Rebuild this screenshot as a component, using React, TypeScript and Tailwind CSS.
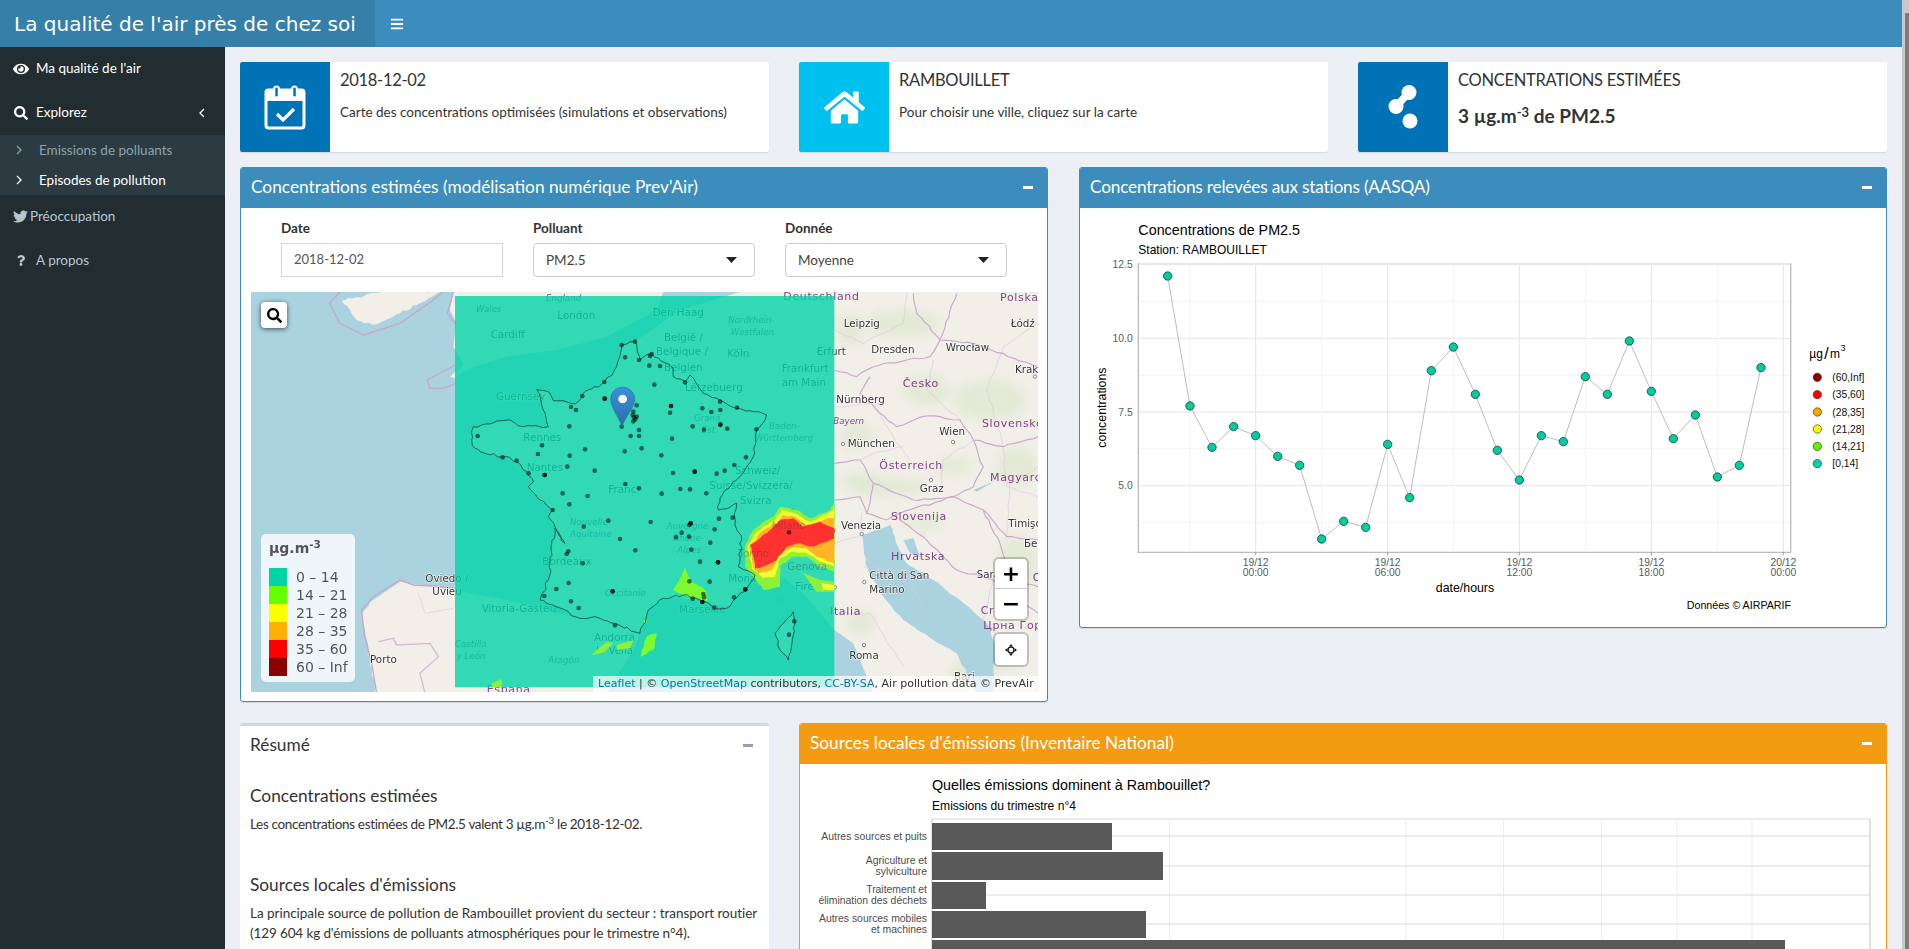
import React from "react";
import { FaEye, FaSearch, FaTwitter, FaQuestion, FaHome, FaBars } from "react-icons/fa";

const SANS = "'Liberation Sans', Arial, sans-serif";
const DJ = "'DejaVu Sans', sans-serif";

function jag(points: string, amp: number, step = 16, seed = 7) {
  let s = seed;
  const rnd = () => {
    s = (s * 16807) % 2147483647;
    return s / 2147483647 - 0.5;
  };
  const pts = points.trim().split(/\s+/).map((p) => p.split(",").map(Number));
  const out: string[] = [];
  for (let i = 0; i < pts.length - 1; i++) {
    const [x1, y1] = pts[i];
    const [x2, y2] = pts[i + 1];
    const len = Math.hypot(x2 - x1, y2 - y1);
    const n = Math.max(1, Math.round(len / step));
    for (let k = 0; k < n; k++) {
      const t = k / n;
      const j = k === 0 ? 0 : amp;
      out.push(`${(x1 + (x2 - x1) * t + rnd() * j).toFixed(1)},${(y1 + (y2 - y1) * t + rnd() * j).toFixed(1)}`);
    }
  }
  out.push(pts[pts.length - 1].join(","));
  return out.join(" ");
}

function Calendar() {
  return (
    <svg width="42" height="46" viewBox="0 0 42 46" fill="none">
      <rect x="2" y="6" width="38" height="38" rx="2.5" stroke="#fff" strokeWidth="3" fill="none" />
      <rect x="2" y="6" width="38" height="11" fill="#fff" />
      <rect x="9" y="1.5" width="7" height="13" rx="3.5" fill="#fff" />
      <rect x="27" y="1.5" width="7" height="13" rx="3.5" fill="#fff" />
      <rect x="11.3" y="3.5" width="2.5" height="9" rx="1.2" fill="#0073b7" />
      <rect x="29.3" y="3.5" width="2.5" height="9" rx="1.2" fill="#0073b7" />
      <path d="M13 30 L19 36 L30 25" stroke="#fff" strokeWidth="3.2" fill="none" />
    </svg>
  );
}

function Blobs() {
  return (
    <svg width="30" height="44" viewBox="0 0 30 44">
      <circle cx="21" cy="7.5" r="7.5" fill="#fff" />
      <circle cx="8" cy="21.5" r="7.5" fill="#fff" />
      <line x1="21" y1="7.5" x2="8" y2="21.5" stroke="#fff" strokeWidth="7.5" />
      <circle cx="22" cy="36" r="7.5" fill="#fff" />
    </svg>
  );
}

function Chevron({ dir, className = "" }: { dir: "left" | "right"; className?: string }) {
  return (
    <svg width="6" height="10" viewBox="0 0 6 10" className={className}>
      <polyline points={dir === "left" ? "5,1 1,5 5,9" : "1,1 5,5 1,9"} fill="none" stroke="currentColor" strokeWidth="1.3" />
    </svg>
  );
}

function Minus({ color = "bg-white" }: { color?: string }) {
  return <div className={`w-[10px] h-[3px] ${color}`} />;
}

function InfoBox({ color, icon, title, children }: { color: string; icon: React.ReactNode; title: string; children: React.ReactNode }) {
  return (
    <div className="h-[90px] bg-white rounded-[2px] flex shadow-[0_1px_1px_rgba(0,0,0,0.1)] overflow-hidden">
      <div className={`w-[90px] shrink-0 flex items-center justify-center ${color}`}>{icon}</div>
      <div className="pl-[10px] pt-[6px] text-[#333]">
        <div className="text-[16.5px] leading-[24px] tracking-[-0.3px]">{title}</div>
        {children}
      </div>
    </div>
  );
}

function Select({ value }: { value: string }) {
  return (
    <div className="h-[34px] border border-[#c9ccd3] rounded-[4px] bg-white flex items-center justify-between pl-[12px] pr-[17px] text-[13.5px] text-[#444]">
      <span>{value}</span>
      <svg width="11" height="6" viewBox="0 0 11 6"><polygon points="0,0 11,0 5.5,6" fill="#222" /></svg>
    </div>
  );
}

const dots2 = [[1145,195],[1185,185],[1155,232],[1093,306],[1027,348],[1094,356],[993,381],[1008,390],[988,439],[1145,440],[1172,468],[713,468],[906,496],[894,522],[989,527],[1035,508],[1154,514],[788,532],[830,542],[982,560],[866,580],[914,585],[1064,572],[1156,612],[968,640],[1043,648],[988,673],[938,690],[1105,722],[1031,740],[1140,777],[1186,811],[985,814],[980,822],[1028,850],[986,909],[949,927],[1118,934],[913,948],[993,964],[1016,984],[1125,1036],[1190,376],[1180,395],[1178,405],[1182,412],[1186,418],[1180,424],[1190,410],[1197,240],[1197,450],[1197,468],[1197,625]];
const dots3 = [[35,222],[30,228],[28,257],[60,258],[43,314],[135,307],[93,378],[90,398],[187,385],[214,396],[241,390],[240,365],[291,383],[158,439],[192,449],[241,434],[262,446],[349,448],[96,476],[5,505],[64,526],[318,532],[283,555],[254,572],[230,581],[164,575],[99,579],[121,627],[150,628],[199,640],[65,641],[237,716],[278,713],[32,726],[152,730],[148,735],[224,748],[125,758],[108,772],[147,770],[211,788],[154,809],[180,845],[234,847],[148,904],[209,905],[190,942],[192,952],[158,956],[187,966],[223,983],[282,952],[316,928],[447,757],[463,1024],[447,1064]];

const france = "1185,185 1145,195 1130,260 1095,305 1030,340 1005,372 940,362 925,335 890,328 910,390 925,440 850,440 810,420 750,432 700,440 695,480 705,505 735,520 790,530 830,545 860,575 880,605 865,620 900,660 940,690 925,710 945,740 975,790 945,745 925,900 900,960 950,980 1020,1015 1065,1010 1125,1030 1200,1060 1225,990 1270,955 1330,945 1380,960 1425,985 1460,985 1520,925 1545,885 1495,860 1505,780 1485,735 1490,670 1435,690 1440,655 1500,590 1540,530 1550,450 1580,405 1540,395 1490,385 1440,360 1390,340 1350,285 1335,305 1300,290 1300,265 1235,220 1200,240 1185,185";
const franceJag = jag(france, 9, 13);
const corsicaJag = jag("1660,995 1665,1030 1645,1140 1620,1110 1605,1060 1630,1030 1660,995", 7, 12, 31);

type L = [string, number, number];
const cities: L[] = [["London",952,116],["Cardiff",752,174],["Rennes",850,482],["Nantes",860,572],["Bordeaux",907,856],["Vitoria-Gasteiz",725,995],["Oviedo /",556,905],["Uviéu",577,946],["Porto",390,1150],["Andorra",1062,1082],["la Vella",1068,1122],
["Den Haag",1238,108],["Köln",1462,232],["Frankfurt",1625,276],["am Main",1625,318],["Erfurt",1730,226],["Leipzig",1811,140],["Dresden",1894,220],["Wrocław",2117,212],["Łódź",2312,142],["Krak",2325,278],["Nürnberg",1789,368],["München",1823,502],["Wien",2098,465],["Graz",2039,636],["Venezia",1803,748],["Timişo",2305,742],["Бео",2352,802],["Monaco",1465,906],["Firenze",1666,931],["Marseille",1318,1000],["Città di San",1888,896],["Marino",1888,938],["Sara",2210,894],["Roma",1828,1136],["Bari",2142,1200],["Schweiz/",1485,582],["Suisse/Svizzera/",1408,628],["Svizra",1500,672],["België /",1272,182],["Belgique /",1248,226],["Belgien",1272,272],["Lëtzebuerg",1335,334],["Guernsey",768,360],["Franc",1105,640]];
const countries: L[] = [["Deutschland",1630,60],["Polska",2280,62],["Česko",1988,322],["Slovensko",2226,440],["Österreich",1918,566],["Magyaro",2250,604],["Slovenija",1953,720],["Hrvatska",1953,840],["Italia",1770,1004],["Crna",2222,1002],["Црна Гор",2230,1048],["España",740,1238],["C",2378,902]];
const regions: L[] = [["Wales",708,96],["England",918,64],["Nouvelle-",990,736],["Aquitaine",990,772],["Occitanie",1095,948],["Castilla",645,1100],["y León",650,1136],["Aragón",925,1148],["Nordrhein-",1465,130],["Westfalen",1472,166],["Grand",1362,424],["Est",1385,460],["Baden-",1587,448],["Württemberg",1545,484],["Bayern",1780,432],["Auvergne-",1280,746],["Rhône-",1300,782],["Alpes",1312,818]];

const borders = [
  "1783,270 1850,290 1900,260 2000,240 2070,230 2100,180 2030,100 2020,40",
  "1890,290 1860,340 1920,400 1970,440 2045,410 2100,410 2160,420 2200,480 2290,500 2394,470",
  "1783,550 1860,540 1900,610 2020,660 2140,650 2200,620 2230,560 2200,480",
  "1900,610 1880,700 1940,720 1980,700 2140,650 2230,690 2300,770 2394,780",
  "1980,720 2050,770 2150,870 2260,900 2394,1000",
  "2230,690 2280,790 2310,900 2394,920",
  "2150,40 2100,180 2200,190 2394,260",
  "1783,660 1860,650 1880,700",
];
const minor = [
  "1783,150 1870,190 1990,130 2000,40", "1783,380 1900,370 1960,470 2010,540", "2080,240 2060,330 2160,420", "2290,500 2300,620 2394,650",
  "1990,500 1900,520 1860,540", "2100,640 2110,540 2200,480", "1783,790 1860,770 1865,700", "1870,860 1990,870 2060,1000", "1800,1000 1890,1000 1990,1160", "2394,130 2290,200 2240,330 2290,500",
  "2394,560 2310,610 2300,770", "2260,900 2230,1020 2300,1100",
];
const forests = [[1990,130,110,40],[2060,330,70,45],[1850,470,50,40],[1950,620,120,28],[2250,360,110,60],[2330,560,60,60],[2330,850,60,80],[1830,150,40,50],[2200,1180,70,40],[1860,1030,40,40],[1860,600,60,25],[2140,560,60,25],[2050,730,60,20],[2290,1120,60,50]];

function FranceMap() {
  return (
    <div className="relative w-[787px] h-[400px] overflow-hidden [font-family:'DejaVu_Sans',sans-serif]">
      <svg width="787" height="400" viewBox="0 0 787 400" className="block">
        <defs>
          <filter id="soft" x="-30%" y="-30%" width="160%" height="160%"><feGaussianBlur stdDeviation="16" /></filter>
          <linearGradient id="pin" x1="0" y1="0" x2="0" y2="1">
            <stop offset="0" stopColor="#3d8fd6" />
            <stop offset="1" stopColor="#2a6db3" />
          </linearGradient>
        </defs>
        <rect width="787" height="400" fill="#f2efe9" />
        <g transform="translate(-11,-12) scale(0.33333)">
          <g filter="url(#soft)">
            {forests.map(([x, y, a, b], i) => <ellipse key={i} cx={x} cy={y} rx={a} ry={b} fill="#d9e6c8" opacity="0.6" />)}
          </g>
          {/* Atlantic */}
          <polygon fill="#aad3df" points={`33,36 1500,36 1320,90 1185,185 ${france.split(" ").slice(1, 33).join(" ")} 800,960 640,930 480,905 400,960 ${jag("400,960 365,1000 385,1100 405,1240", 6, 14, 11)} 33,1240`} />
          {/* Med */}
          <polygon fill="#aad3df" points="1225,990 1200,1060 1180,1110 1100,1240 1900,1240 1840,1090 1783,1050 1700,950 1630,890 1545,885 1520,925 1460,985 1380,960 1270,955" />
          {/* Adriatic */}
          <polygon fill="#aad3df" points={jag("1865,765 1950,735 1975,800 2000,850 2080,900 2160,960 2240,1030 2265,1090 2260,1240 2210,1240 2150,1120 2080,1080 1990,1020 1930,950 1880,860 1865,765", 5, 14, 17)} />
          <polygon fill="#aad3df" points="1990,780 2020,775 2040,830 2010,820" />
          {/* UK and islands */}
          <polygon fill="#f2efe9" points="645,290 700,260 800,230 950,210 1100,170 1250,90 1270,36 640,36 630,90 650,130 640,200 670,250" />
          <polygon fill="#f2efe9" points={jag("305,62 350,52 420,36 600,36 530,75 480,100 400,135 350,120 330,90 305,62", 7, 12, 23)} />
          <polyline fill="none" stroke="#c8a6cc" strokeWidth="4" points="300,36 268,70 300,130 370,165 480,130 580,60 610,36" />
          <polyline fill="none" stroke="#c8a6cc" strokeWidth="4" points="640,36 622,100 645,130" />
          <polyline fill="none" stroke="#c8a6cc" strokeWidth="4" points="645,255 590,285 562,300 570,325 610,325 645,312" />
          <polygon fill="#f2efe9" points="630,290 645,275 645,295" />
          {/* Corsica */}
          <polygon fill="#f2efe9" points="1660,995 1665,1030 1645,1140 1620,1110 1605,1060 1630,1030" />
          {/* Spain boundaries */}
          <polyline fill="none" stroke="#c8a6cc" strokeWidth="4" points="640,922 520,915 480,900 400,950 365,990 372,1060 395,1150 410,1240" />
          <polyline fill="none" stroke="#d8b8d8" strokeWidth="4" points="415,1085 460,1075 470,1095 570,1090 595,1130 540,1180 555,1240" />
          <polyline fill="none" stroke="#e0c8d8" strokeWidth="2" points="535,940 555,1000 640,985" />
          {minor.map((b, i) => <polyline key={i} fill="none" stroke="#dcc8dc" strokeWidth="2" points={jag(b, 6, 18, 40 + i)} />)}
          {borders.map((b, i) => <polyline key={i} fill="none" stroke="#c9a8cb" strokeWidth="3.4" points={jag(b, 6, 18, 60 + i)} />)}
          <polygon fill="#a6d0e0" points="2200,630 2260,605 2210,635" />
          {/* labels */}
          {cities.map(([t, x, y], i) => <text key={i} x={x} y={y} fontFamily={DJ} fontSize="31" fill="#333" stroke="#fff" strokeWidth="3" paintOrder="stroke">{t}</text>)}
          {countries.map(([t, x, y], i) => <text key={i} x={x} y={y} fontFamily={DJ} fontSize="33" letterSpacing="2" fill="#85418a">{t}</text>)}
          {regions.map(([t, x, y], i) => <text key={i} x={x} y={y} fontFamily={DJ} fontSize="26" fontStyle="italic" fill="#7a4a88">{t}</text>)}
          {[[2139,486],[1809,492],[1873,906],[1872,1095],[2385,290],[1865,762],[2073,600],[1785,922],[1623,960]].map(([x, y], i) => <circle key={i} cx={x} cy={y} r="5" fill="#fff" stroke="#555" strokeWidth="2" />)}
          {/* pollution overlay */}
          <rect x="645" y="48" width="1138" height="1174" fill="#00d4a8" opacity="0.8" />
          <g transform="translate(1200,0)">
            <polygon fill="#8df03a" points={jag("315,800 340,750 400,710 420,680 470,690 510,715 570,690 583,665 583,875 540,860 500,830 460,830 420,860 420,920 370,930 340,890 315,860 315,800", 5, 12, 3)} />
            <polygon fill="#f3fb33" points={jag("322,800 350,755 405,720 425,690 465,700 510,725 565,700 583,685 583,860 540,845 500,820 460,815 420,835 405,890 370,895 335,865 322,800", 5, 12, 5)} />
            <polygon fill="#ffb326" points={jag("328,798 370,750 410,730 430,705 465,710 500,735 560,715 583,715 583,850 530,830 500,805 460,800 420,820 395,870 355,880 340,860 328,798", 5, 12, 9)} />
            <polygon fill="#ff3232" points={jag("330,795 390,750 420,720 460,715 490,740 540,725 583,745 583,775 520,800 480,790 440,800 410,840 370,860 345,865 340,830 330,795", 4, 12, 13)} />
            <polygon fill="#7dfb2c" points={jag("135,860 150,900 195,930 205,965 130,945 100,930 125,890 135,860", 4, 10, 19)} />
            <polygon fill="#7dfb2c" points={jag("0,1130 20,1070 50,1060 40,1110 0,1130", 4, 10, 21)} />
            <polygon fill="#8df03a" points="490,880 540,900 583,905 583,935 530,935" />
            <polygon fill="#f3fb33" points="545,910 583,915 583,930 550,930" />
            <polygon fill="#8df03a" points="-147,1125 -100,1085 -80,1090 -110,1120" />
            <polygon fill="#8df03a" points="-70,1095 -20,1080 -30,1105 -70,1110" />
            <polygon fill="#8df03a" points="-445,1210 -415,1197 -415,1222 -445,1222" />
            <polygon fill="#8df03a" points="12,1022 20,1020 20,1028 12,1028" />
            {([["Milano",395,746],["Torino",295,830],["Genova",442,871]] as [string, number, number][]).map(([t, x, y]) => <text key={t} x={x} y={y} fontFamily={DJ} fontSize="31" fill="#333" opacity="0.35">{t}</text>)}
          </g>
          {/* France outline */}
          <polyline fill="none" stroke="#0b3a33" strokeWidth="2.2" points={franceJag} />
          <polyline fill="none" stroke="#0b3a33" strokeWidth="2.2" points={corsicaJag} />
          {dots2.map(([x, y], i) => <circle key={i} cx={x} cy={y} r="7" fill="#000" opacity="0.55" />)}
          {dots3.map(([x, y], i) => <circle key={i} cx={x + 1200} cy={y} r="7" fill="#000" opacity="0.55" />)}
          {[[1094,356],[914,585],[1118,934],[1293,378],[1441,434],[1364,575],[1352,730],[1434,847],[1387,966],[1516,928]].map(([x, y], i) => <circle key={i} cx={x} cy={y} r="7" fill="#000" opacity="0.7" />)}
          <path d="M1148 322 C1125 322 1112 340 1112 358 C1112 380 1135 410 1146 438 C1157 410 1184 380 1184 358 C1184 340 1170 322 1148 322Z" fill="url(#pin)" stroke="#2e6c97" strokeWidth="2" />
          <circle cx="1148" cy="357" r="13" fill="#fff" />
        </g>
      </svg>

      <button className="absolute left-[10px] top-[10px] w-[26px] h-[26px] bg-white rounded-[4px] shadow-[0_1px_5px_rgba(0,0,0,0.65)] flex items-center justify-center text-black text-[15px]">
        <FaSearch />
      </button>

      <div className="absolute left-[10px] top-[242px] w-[94px] h-[148px] bg-white/80 rounded-[5px] pl-[8px] pt-[5px] text-[#555] text-[14px] leading-[18px]">
        <div className="font-bold h-[29px]">µg.m<sup className="text-[10.5px]">-3</sup></div>
        {[["#00d4a6","0 – 14"],["#66ff00","14 – 21"],["#ffff00","21 – 28"],["#ffb000","28 – 35"],["#ff0000","35 – 60"],["#8b0000","60 – Inf"]].map(([c, t]) => (
          <div key={t} className="flex h-[18px]">
            <div className="w-[18px] h-[18px] mr-[9px]" style={{ background: c }} />
            <span className="whitespace-nowrap">{t}</span>
          </div>
        ))}
      </div>

      <div className="absolute right-[11px] top-[267px] w-[32px] rounded-[4px] shadow-[0_0_0_2px_rgba(0,0,0,0.2)] bg-white">
        <div className="h-[30px] flex items-center justify-center text-[22px] font-bold text-black leading-none border-b border-[#ccc]">+</div>
        <div className="h-[30px] flex items-center justify-center text-[22px] font-bold text-black leading-none">−</div>
      </div>
      <div className="absolute right-[11px] top-[342px] w-[32px] h-[31px] rounded-[4px] shadow-[0_0_0_2px_rgba(0,0,0,0.2)] bg-white flex items-center justify-center">
        <svg width="12" height="12" viewBox="0 0 12 12"><path d="M6 0 L8 2.6 L4 2.6Z M6 12 L8 9.4 L4 9.4Z M0 6 L2.6 4 L2.6 8Z M12 6 L9.4 4 L9.4 8Z" fill="#111" /><rect x="3.2" y="3.2" width="5.6" height="5.6" rx="2.4" fill="none" stroke="#111" strokeWidth="1.2" /></svg>
      </div>

      <div className="absolute right-0 bottom-0 h-[16px] bg-white/70 px-[5px] text-[11px] leading-[16px] text-[#333] whitespace-nowrap w-[445px] tracking-[0.01px]">
        <a className="text-[#0078a8]">Leaflet</a> | © <a className="text-[#0078a8]">OpenStreetMap</a> contributors, <a className="text-[#0078a8]">CC-BY-SA</a>, Air pollution data © PrevAir
      </div>
    </div>
  );
}

const px = [263,330,396,461,527,593,659,725,791,857,923,989,1054,1120,1186,1252,1318,1384,1450,1516,1582,1648,1714,1780,1846,1912,1978,2043];
const py = [348,738,862,800,827,889,916,1137,1084,1102,853,1013,632,561,703,871,960,827,845,650,703,543,694,836,765,951,916,623];

function LineChart() {
  return (
    <svg width="806" height="419" viewBox="1080 208 806 419" className="block">
      <g transform="translate(1080,160) scale(0.33333)" fontFamily={SANS}>
        <rect x="175" y="310" width="1957" height="867" fill="#fff" />
        {[424,646,866,1087].map((y) => <line key={y} x1="175" x2="2132" y1={y} y2={y} stroke="#f0f0f0" strokeWidth="2.5" />)}
        {[535,756,977].map((y) => <line key={y} x1="175" x2="2132" y1={y} y2={y} stroke="#ebebeb" strokeWidth="4" />)}
        {[330,725,1120,1516,1912].map((x) => <line key={x} y1="310" y2="1177" x1={x} x2={x} stroke="#f0f0f0" strokeWidth="2.5" />)}
        {[527,923,1318,1714,2110].map((x) => <line key={x} y1="310" y2="1177" x1={x} x2={x} stroke="#e5e5e5" strokeWidth="3" />)}
        <line x1="175" x2="2132" y1="312" y2="312" stroke="#e8e8e8" strokeWidth="6" />
        <polyline points="175,310 175,1177 2132,1177 2132,310" fill="none" stroke="#bcbcbc" strokeWidth="4" />
        <polyline fill="none" stroke="#bdbdbd" strokeWidth="3" points={px.map((x, i) => `${x},${py[i]}`).join(" ")} />
        {px.map((x, i) => <circle key={i} cx={x} cy={py[i]} r="12.5" fill="#00cc9e" stroke="#1d4a40" strokeWidth="2.6" />)}
        <text x="175" y="224" fontSize="43" fill="#000">Concentrations de PM2.5</text>
        <text x="175" y="281" fontSize="36" fill="#000">Station: RAMBOUILLET</text>
        {[["12.5",323],["10.0",546],["7.5",767],["5.0",988]].map(([t, y]) => <text key={t} x="158" y={y} textAnchor="end" fontSize="31" fill="#5a5a5a">{t}</text>)}
        {([[527,"19/12","00:00"],[923,"19/12","06:00"],[1318,"19/12","12:00"],[1714,"19/12","18:00"],[2110,"20/12","00:00"]] as [number, string, string][]).map(([x, a, b]) => (
          <g key={x} fontSize="31" fill="#5a5a5a" textAnchor="middle">
            <text x={x} y="1217">{a}</text>
            <text x={x} y="1247">{b}</text>
          </g>
        ))}
        {[527,923,1318,1714,2110].map((x) => <line key={x} y1="1177" y2="1186" x1={x} x2={x} stroke="#888" strokeWidth="2.5" />)}
        <text x="1155" y="1295" fontSize="37" textAnchor="middle" fill="#000">date/hours</text>
        <text transform="translate(77,743) rotate(-90)" fontSize="37" textAnchor="middle" fill="#000">concentrations</text>
        <text x="2188" y="594" fontSize="36" fill="#000">µg</text>
        <text x="2233" y="597" fontSize="48" fill="#000">/</text>
        <text x="2250" y="594" fontSize="36" fill="#000">m</text>
        <text x="2282" y="574" fontSize="25" fill="#000">3</text>
        {([["#8b0000","(60,Inf]",652],["#ff0000","(35,60]",704],["#ffa500","(28,35]",756],["#ffff00","(21,28]",807],["#66ee00","(14,21]",859],["#00d4a6","[0,14]",911]] as [string, string, number][]).map(([c, t, y]) => (
          <g key={t}>
            <circle cx="2212" cy={y} r="12.5" fill={c} stroke="#333" strokeWidth="2" />
            <text x="2257" y={y + 11} fontSize="31" fill="#111">{t}</text>
          </g>
        ))}
        <text x="2133" y="1346" fontSize="32" textAnchor="end" fill="#000">Données © AIRPARIF</text>
      </g>
    </svg>
  );
}

function BarChart() {
  const labels: [string[], number][] = [[["Autres sources et puits"], 836], [["Agriculture et", "sylviculture"], 866], [["Traitement et", "élimination des déchets"], 895], [["Autres sources mobiles", "et machines"], 924]];
  const bars = [[823, 27, 1112], [852, 28, 1163], [882, 27, 986], [911, 27, 1146], [940, 27, 1785]];
  return (
    <svg width="1086" height="185" viewBox="800 764 1086 185" className="block">
      <g fontFamily={SANS}>
        <text x="932" y="790" fontSize="14.3" fill="#000">Quelles émissions dominent à Rambouillet?</text>
        <text x="932" y="810" fontSize="12.1" fill="#000">Emissions du trimestre n°4</text>
        <rect x="932" y="819" width="938" height="140" fill="#fff" />
        {[1169.5, 1406, 1503.5, 1601.5, 1677, 1752].map((x) => <line key={x} x1={x} x2={x} y1="819" y2="960" stroke="#ececec" />)}
        {[836, 866, 895, 924].map((y) => <line key={y} x1="932" x2="1870" y1={y} y2={y} stroke="#e6e6e6" strokeWidth="1.5" />)}
        <line x1="932" x2="1870" y1="819" y2="819" stroke="#e6e6e6" strokeWidth="1.5" />
        <polyline points="932,960 932,819" fill="none" stroke="#c0c0c0" />
        <polyline points="1870,960 1870,819" fill="none" stroke="#c0c0c0" />
        {bars.map(([y, h, x2]) => <rect key={y} x="932" y={y} width={x2 - 932} height={h} fill="#595959" />)}
        {labels.map(([l, y]) => l.map((t, i) => (
          <text key={t} x="927" y={l.length === 1 ? y + 4 : y - 2 + i * 10.5} textAnchor="end" fontSize="10.4" fill="#4d4d4d">{t}</text>
        )))}
      </g>
    </svg>
  );
}

function Box({ title, color, border, children, className = "", titleClass = "" }: { title: string; color: string; border: string; children: React.ReactNode; className?: string; titleClass?: string }) {
  return (
    <div className={`bg-white border rounded-[3px] overflow-hidden shadow-[0_1px_1px_rgba(0,0,0,0.1)] ${border} ${className}`}>
      <div className={`h-[41px] -mt-px -mx-px flex items-center justify-between pl-[11px] pr-[15px] text-white text-[17.3px] pb-[1px] ${color}`}>
        <span className={titleClass}>{title}</span>
        <Minus />
      </div>
      {children}
    </div>
  );
}

function SideItem({ icon, label, className = "", right }: { icon: React.ReactNode; label: string; className?: string; right?: React.ReactNode }) {
  return (
    <div className={`h-[44px] flex items-center pl-[13px] pb-[1px] text-[13.5px] ${className}`}>
      {icon}
      <span>{label}</span>
      {right}
    </div>
  );
}

export default function App() {
  return (
    <div className="w-[1909px] h-[949px] overflow-hidden flex bg-[#ecf0f5] [font-family:Lato,'Open_Sans',sans-serif]">
      <div className="w-[1902px] shrink-0 flex flex-col h-full">
        <header className="h-[47px] shrink-0 flex bg-[#3c8dbc] text-white">
          <div className="w-[375px] bg-[#367fa9] pl-[14px] flex items-center text-[20px] whitespace-nowrap [font-family:'DejaVu_Sans',sans-serif]">La qualité de l'air près de chez soi</div>
          <div className="pl-[15px] flex items-center text-[14px]"><FaBars /></div>
        </header>
        <div className="flex flex-1 min-h-0">
          <aside className="w-[225px] shrink-0 bg-[#222d32] text-[#b8c7ce]">
            <SideItem className="text-white" icon={<FaEye className="text-[16px] w-[16px] mr-[7px]" />} label="Ma qualité de l'air" />
            <SideItem className="text-white" icon={<FaSearch className="text-[14px] w-[16px] mr-[7px]" />} label="Explorez" right={<Chevron dir="left" className="ml-auto mr-[20px]" />} />
            <div className="bg-[#2c3b41] h-[60px] text-[13.5px]">
              <div className="h-[30px] flex items-center pl-[16px] text-[#8aa4af]"><Chevron dir="right" className="mr-[17px]" /><span>Emissions de polluants</span></div>
              <div className="h-[30px] flex items-center pl-[16px] text-white"><Chevron dir="right" className="mr-[17px]" /><span>Episodes de pollution</span></div>
            </div>
            <SideItem icon={<FaTwitter className="text-[15px] w-[15px] mr-[2px]" />} label="Préoccupation" />
            <SideItem icon={<FaQuestion className="text-[11px] w-[10px] ml-[3px] mr-[10px]" />} label="A propos" />
          </aside>
          <main className="flex-1 min-w-0 p-[15px] text-[#333]">
            <div className="grid grid-cols-[529px_529px_529px] gap-[30px]">
              <InfoBox color="bg-[#0073b7]" icon={<Calendar />} title="2018-12-02">
                <div className="mt-[10px] text-[13.5px] leading-[20px] whitespace-nowrap">Carte des concentrations optimisées (simulations et observations)</div>
              </InfoBox>
              <InfoBox color="bg-[#00c0ef]" icon={<FaHome className="text-white text-[41px]" />} title="RAMBOUILLET">
                <div className="mt-[10px] text-[13.5px] leading-[20px]">Pour choisir une ville, cliquez sur la carte</div>
              </InfoBox>
              <InfoBox color="bg-[#0073b7]" icon={<Blobs />} title="CONCENTRATIONS ESTIMÉES">
                <div className="mt-[9px] text-[19px] font-bold leading-[30px]">3 µg.m<sup className="text-[13px]">-3</sup> de PM2.5</div>
              </InfoBox>
            </div>

            <div className="grid grid-cols-[808px_808px] gap-[31px] items-start mt-[15px]">
              <Box title="Concentrations estimées (modélisation numérique Prev'Air)" color="bg-[#3c8dbc]" border="border-[#3c8dbc]" className="h-[535px]">
                <div className="px-[10px] pt-[10px]">
                  <div className="grid grid-cols-[222px_222px_222px] gap-[30px] pl-[30px] h-[74px]">
                    <div>
                      <div className="text-[13.5px] font-bold h-[20px] leading-[20px] mb-[5px]">Date</div>
                      <div className="h-[34px] border border-[#d2d6de] pl-[12px] flex items-center text-[13px] text-[#555]">2018-12-02</div>
                    </div>
                    <div>
                      <div className="text-[13.5px] font-bold h-[20px] leading-[20px] mb-[5px]">Polluant</div>
                      <Select value="PM2.5" />
                    </div>
                    <div>
                      <div className="text-[13.5px] font-bold h-[20px] leading-[20px] mb-[5px]">Donnée</div>
                      <Select value="Moyenne" />
                    </div>
                  </div>
                  <FranceMap />
                </div>
              </Box>
              <Box title="Concentrations relevées aux stations (AASQA)" titleClass="tracking-[-0.22px]" color="bg-[#3c8dbc]" border="border-[#3c8dbc]" className="h-[461px]">
                <LineChart />
              </Box>
            </div>

            <div className="grid grid-cols-[529px_1088px] gap-[30px] mt-[21px] items-start">
              <div className="bg-white border-t-[3px] border-[#d2d6de] rounded-[3px] h-[400px] pl-[10px] pr-[10px]">
                <div className="flex items-center justify-between h-[38px] pr-[6px] text-[17.3px]">
                  <span>Résumé</span>
                  <Minus color="bg-[#97a0b3]" />
                </div>
                <h3 className="text-[17.3px] leading-[20px] mt-[22px]">Concentrations estimées</h3>
                <p className="text-[13.5px] leading-[20px] mt-[8px] tracking-[-0.33px] whitespace-nowrap">Les concentrations estimées de PM2.5 valent 3 µg.m<sup className="text-[10px]">-3</sup> le 2018-12-02.</p>
                <h3 className="text-[17.3px] leading-[20px] mt-[41px]">Sources locales d'émissions</h3>
                <p className="text-[13.5px] leading-[20px] mt-[8px] whitespace-nowrap">
                  <span className="tracking-[-0.03px]">La principale source de pollution de Rambouillet provient du secteur : transport routier</span>
                  <br />
                  <span className="tracking-[-0.12px]">(129 604 kg d'émissions de polluants atmosphériques pour le trimestre n°4).</span>
                </p>
              </div>
              <Box title="Sources locales d'émissions (Inventaire National)" color="bg-[#f39c12]" border="border-[#f39c12]" className="h-[400px]">
                <BarChart />
              </Box>
            </div>
          </main>
        </div>
      </div>
      <div className="w-[7px] h-full flex bg-[#e4e4e4]">
        <div className="w-[3px] bg-[#c8c8c8]" />
        <div className="w-[4px] flex flex-col">
          <div className="h-[13px] bg-[#c8c8c8]" />
          <div className="flex-1 bg-[#7b7b7b]" />
        </div>
      </div>
    </div>
  );
}
